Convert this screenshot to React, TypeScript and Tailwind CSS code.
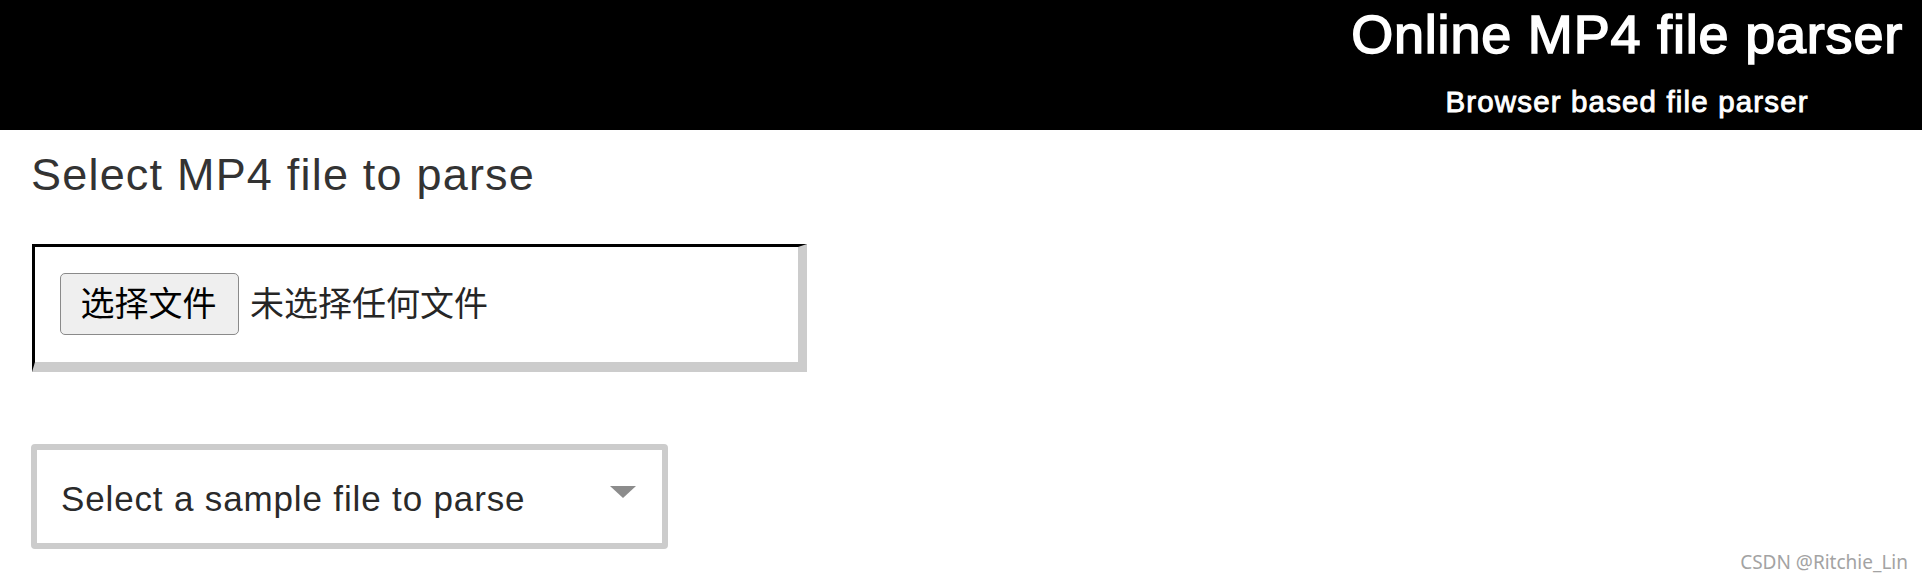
import React from "react";

export default function App() {
  return (
    <div className="relative min-h-[582px] w-full bg-white font-['Liberation_Sans','Noto_Sans_CJK_SC',sans-serif]">
      <header className="flex h-[130px] justify-end bg-black pr-[19px]">
        <div className="flex flex-col items-center text-white">
          <h1 className="mt-[7px] text-[54px] font-normal leading-none tracking-[0.8px] [-webkit-text-stroke:1.6px_white]">
            Online MP4 file parser
          </h1>
          <p className="mt-[26px] text-[29.5px] font-normal leading-none tracking-[1.15px] [-webkit-text-stroke:0.9px_white]">
            Browser based file parser
          </p>
        </div>
      </header>

      <main className="pl-[31px]">
        <h2 className="mt-[22px] text-[45px] leading-none tracking-[1.2px] text-[#333333]">
          Select MP4 file to parse
        </h2>

        <div className="mt-[47px] ml-[1px] flex w-[775px] items-center border-t-[3px] border-l-[3px] border-r-[9px] border-b-[10px] border-t-black border-l-black border-r-[#cccccc] border-b-[#cccccc] bg-white pt-[26px] pb-[27px] pl-[25px]">
          <button
            type="button"
            className="flex h-[62px] w-[179px] items-center justify-center rounded-[5px] border border-[#8a8a8a] bg-[#efefef] pr-[2px] text-[34px] leading-none text-black"
          >
            选择文件
          </button>
          <span className="ml-[11px] text-[34px] leading-none text-[#262626]">
            未选择任何文件
          </span>
        </div>

        <div className="mt-[72px] flex h-[105px] w-[637px] items-center justify-between rounded-[4px] border-[6px] border-[#cccccc] bg-white pl-[24px] pr-[26px]">
          <span className="pt-[3px] text-[35px] leading-none tracking-[0.85px] text-[#2a2a2a]">
            Select a sample file to parse
          </span>
          <svg width="26" height="12" viewBox="0 0 26 12" className="mb-[9px]">
            <polygon points="0,0 26,0 13,12" fill="#8c8c8c" />
          </svg>
        </div>
      </main>

      <div className="absolute bottom-[10px] right-[14px] font-['Noto_Sans',sans-serif] text-[19px] leading-none text-[#a3a3a3] [text-shadow:0_0_1px_rgba(255,255,255,0.8)]">
        CSDN @Ritchie_Lin
      </div>
    </div>
  );
}
